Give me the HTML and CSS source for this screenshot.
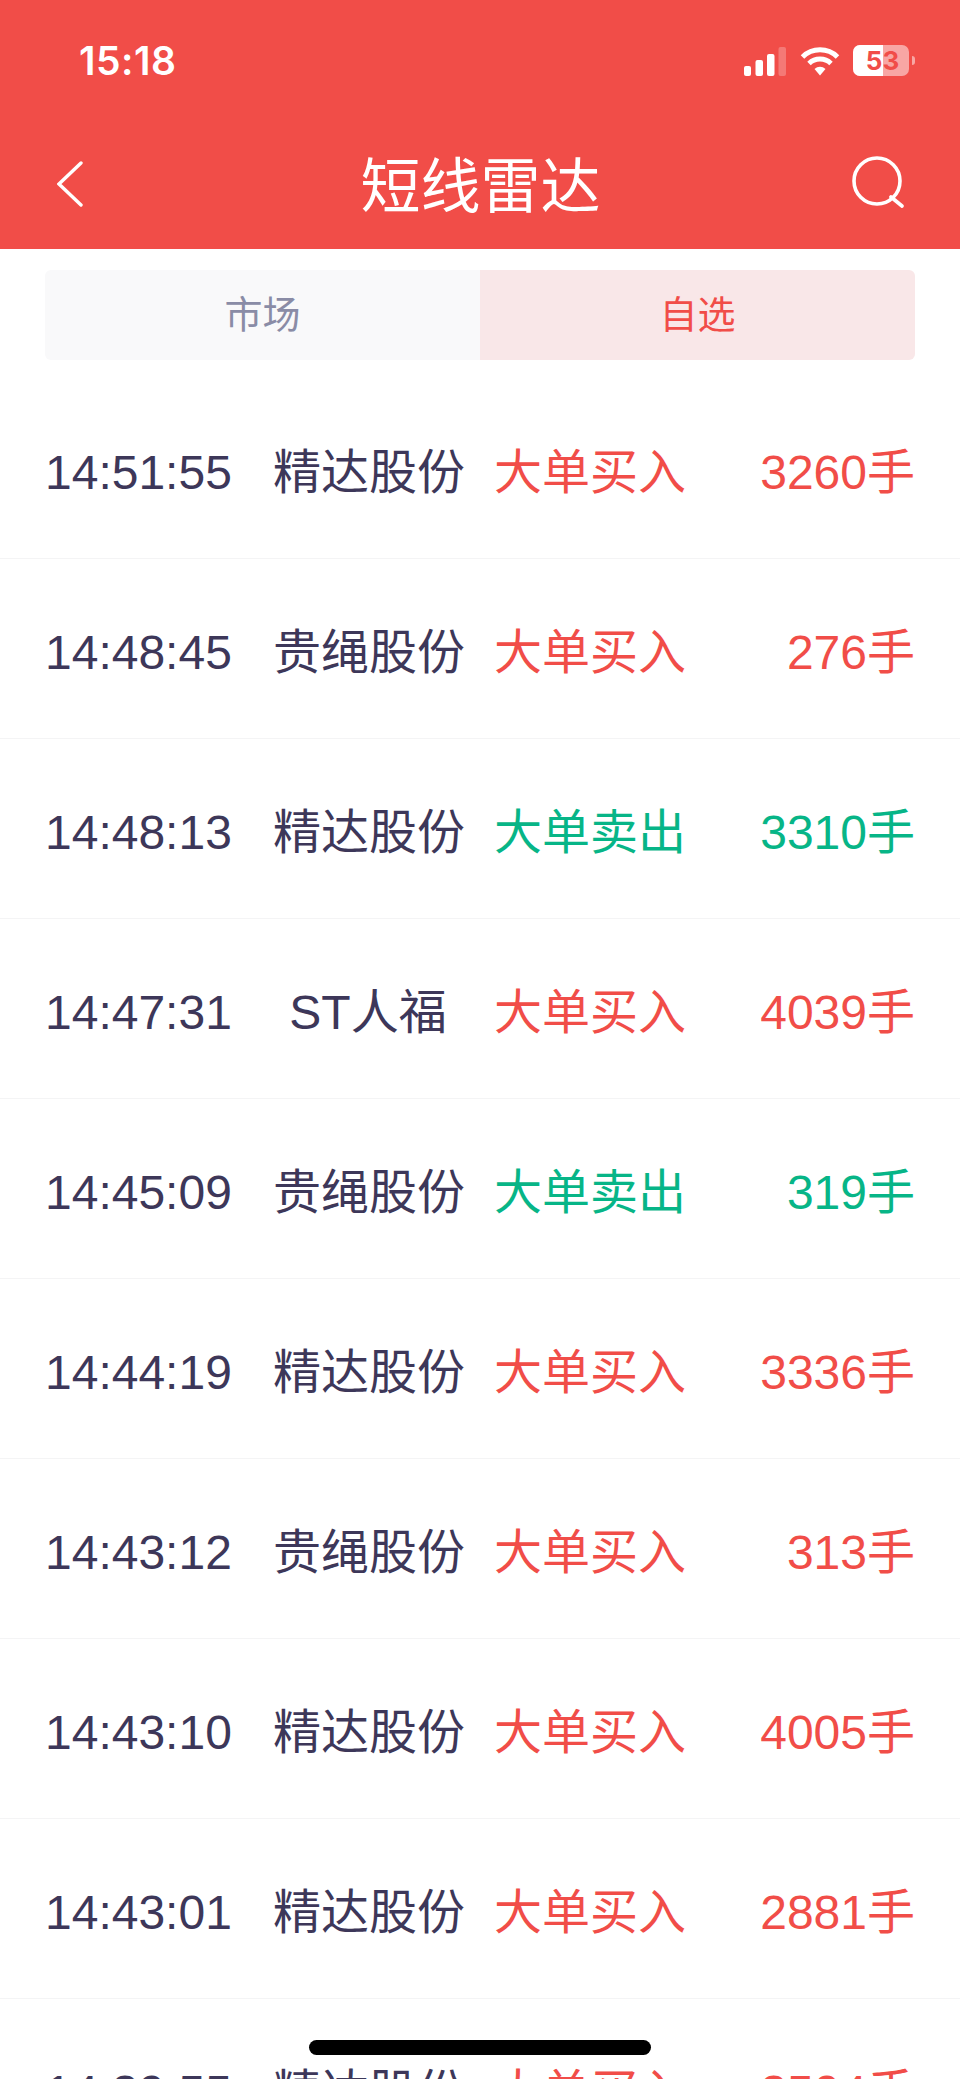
FILE: index.html
```html
<!DOCTYPE html>
<html lang="zh">
<head>
<meta charset="utf-8">
<title>短线雷达</title>
<link rel="stylesheet" href="styles.css">
</head>
<body>
<div class="screen">
  <header class="header">
    <div class="status">
      <span class="clock">15:18</span>
      <div class="status-icons">
        <svg class="signal" width="42" height="29" viewBox="0 0 42 29"><rect x="0" y="19" width="7" height="10" rx="2" fill="#fff"/><rect x="11.5" y="13" width="7.5" height="16" rx="2" fill="#fff"/><rect x="23" y="7" width="7.5" height="22" rx="2" fill="#fff"/><rect x="34.5" y="0" width="7.5" height="29" rx="2" fill="#fff" fill-opacity=".25"/></svg>
        <svg class="wifi" width="40" height="30" viewBox="0 0 40 30"><path d="M2.5 11 A25 25 0 0 1 37.5 11" fill="none" stroke="#fff" stroke-width="5"/><path d="M9 17.5 A16 16 0 0 1 31 17.5" fill="none" stroke="#fff" stroke-width="5"/><path d="M14.5 23 A8 8 0 0 1 25.5 23 L20 29.5 Z" fill="#fff"/></svg>
        <div class="battery">
          <div class="battery-body"><span class="battery-level"></span><span class="battery-num">53</span></div>
          <span class="battery-cap"></span>
        </div>
      </div>
    </div>
    <div class="nav">
      <svg class="back" width="26" height="46" viewBox="0 0 26 46"><path d="M24 2 L2 23 L24 44" fill="none" stroke="#fff" stroke-width="3.4" stroke-linecap="round"/></svg>
      <h1 class="title">短线雷达</h1>
      <svg class="search" width="52" height="52" viewBox="0 0 52 52"><circle cx="25" cy="25" r="23" fill="none" stroke="#fff" stroke-width="3.6"/><path d="M39 41 L50 50" stroke="#fff" stroke-width="3.6" stroke-linecap="round"/></svg>
    </div>
  </header>
  <div class="tabs">
    <div class="tab">市场</div>
    <div class="tab tab-active">自选</div>
  </div>
  <div class="list">
    <div class="row"><span class="time">14:51:55</span><span class="name">精达股份</span><span class="action up">大单买入</span><span class="vol up">3260手</span></div>
    <div class="row"><span class="time">14:48:45</span><span class="name">贵绳股份</span><span class="action up">大单买入</span><span class="vol up">276手</span></div>
    <div class="row"><span class="time">14:48:13</span><span class="name">精达股份</span><span class="action down">大单卖出</span><span class="vol down">3310手</span></div>
    <div class="row"><span class="time">14:47:31</span><span class="name">ST人福</span><span class="action up">大单买入</span><span class="vol up">4039手</span></div>
    <div class="row"><span class="time">14:45:09</span><span class="name">贵绳股份</span><span class="action down">大单卖出</span><span class="vol down">319手</span></div>
    <div class="row"><span class="time">14:44:19</span><span class="name">精达股份</span><span class="action up">大单买入</span><span class="vol up">3336手</span></div>
    <div class="row"><span class="time">14:43:12</span><span class="name">贵绳股份</span><span class="action up">大单买入</span><span class="vol up">313手</span></div>
    <div class="row"><span class="time">14:43:10</span><span class="name">精达股份</span><span class="action up">大单买入</span><span class="vol up">4005手</span></div>
    <div class="row"><span class="time">14:43:01</span><span class="name">精达股份</span><span class="action up">大单买入</span><span class="vol up">2881手</span></div>
    <div class="row"><span class="time">14:39:55</span><span class="name">精达股份</span><span class="action up">大单买入</span><span class="vol up">2504手</span></div>
  </div>
  <div class="home-bar"></div>
</div>
</body>
</html>
```
FILE: styles.css
```css
* { box-sizing: border-box; }
html, body { margin: 0; padding: 0; background: #fff; }
body { font-family: "Liberation Sans", "Noto Sans CJK SC", sans-serif; }
.screen { position: relative; width: 960px; height: 2079px; overflow: hidden; background: #fff; }
.header { height: 249px; background: #f14d48; color: #fff; display: flex; flex-direction: column; }
.status { height: 122px; padding: 38px 45px 0 79px; display: flex; justify-content: space-between; align-items: flex-start; }
.clock { font-family: Inter, "Liberation Sans", sans-serif; font-size: 39px; font-weight: 600; letter-spacing: .5px; line-height: 46px; }
.status-icons { display: flex; align-items: flex-end; height: 38px; }
.signal { margin-right: 14px; }
.wifi { margin-right: 13px; }
.battery { display: flex; align-items: center; gap: 3px; }
.battery-body { position: relative; width: 56px; height: 31px; border-radius: 7px; background: rgba(255,255,255,.5); overflow: hidden; }
.battery-level { position: absolute; left: 0; top: 0; bottom: 0; width: 30px; background: #fff; }
.battery-num { position: absolute; inset: 0; padding-left: 3px; text-align: center; font-family: Inter, "Liberation Sans", sans-serif; font-size: 26px; font-weight: 700; line-height: 31px; color: #f14d48; }
.battery-cap { width: 3px; height: 9px; border-radius: 0 4px 4px 0; background: rgba(255,255,255,.5); }
.nav { flex: 1; padding: 0 56px 8px 57px; display: grid; grid-template-columns: 1fr auto 1fr; align-items: center; }
.back { margin-top: 5px; }
.search { justify-self: end; }
.title { margin: 0; font-size: 60px; font-weight: 400; line-height: 70px; font-family: "Noto Sans CJK SC", sans-serif; }
.tabs { margin: 21px 45px 0; height: 90px; display: flex; border-radius: 6px; overflow: hidden; }
.tab { flex: 1; display: flex; align-items: center; justify-content: center; padding-bottom: 8px; font-size: 38px; font-family: "Noto Sans CJK SC", sans-serif; color: #8a8ca6; background: #f9f9fa; }
.tab-active { color: #f14d48; background: #f9e7e8; }
.list { margin-top: 19px; }
.row { height: 180px; padding: 8px 45px 0 45px; display: flex; align-items: center; border-bottom: 1px solid #f4f4f5; font-size: 48px; line-height: 60px; white-space: nowrap; }
.time { width: 228px; color: #3d3759; }
.name { width: 190px; text-align: center; color: #3d3759; }
.action { width: 190px; margin-left: 31px; }
.vol { flex: 1; text-align: right; }
.up { color: #f14d48; }
.down { color: #07b587; }
.home-bar { position: absolute; left: 309px; top: 2040px; width: 342px; height: 15px; border-radius: 8px; background: #000; }
```
